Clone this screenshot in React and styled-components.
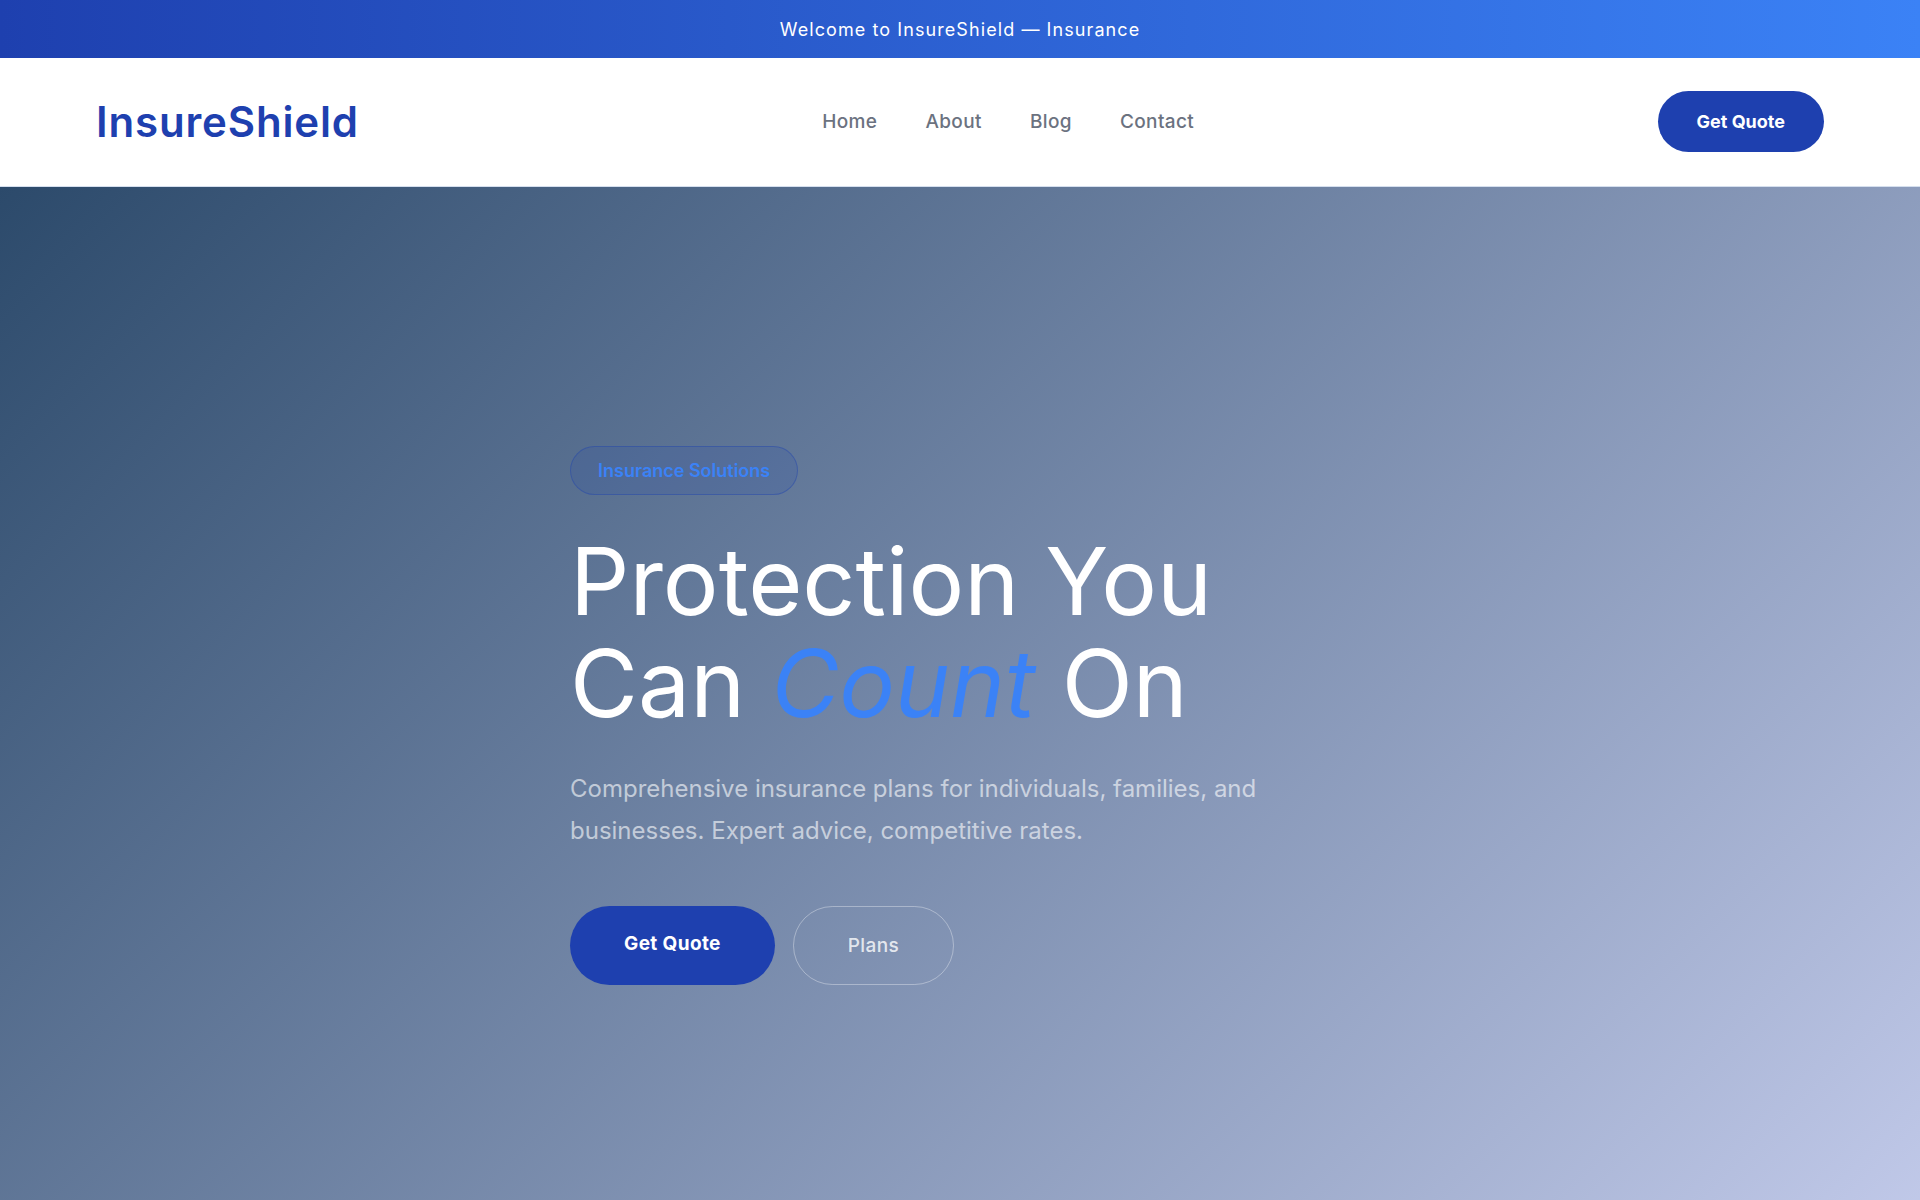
import React from 'react';
import styled, { createGlobalStyle } from 'styled-components';

const GlobalStyle = createGlobalStyle`
    :root {
        --primary: #1e40af;
        --accent: #3b82f6;
        --grey: #6b7280;
    }
    * {
        margin: 0;
        padding: 0;
        box-sizing: border-box;
    }
    body {
        font-family: 'Inter', sans-serif;
        background: #fff;
    }
    a {
        text-decoration: none;
    }
`;

const TopBar = styled.div`
    padding: 17px 5% 15px;
    background: linear-gradient(90deg, var(--primary), var(--accent));
    color: #fff;
    font-size: 18px;
    line-height: 26px;
    letter-spacing: 0.06em;
    text-align: center;
`;

const Nav = styled.nav`
    display: flex;
    justify-content: space-between;
    align-items: center;
    padding: 33px 5% 34px;
    background: #fff;
    border-bottom: 1px solid #d5dfee;
`;

const Logo = styled.a`
    color: var(--primary);
    font-size: 42px;
    font-weight: 600;
    letter-spacing: 0.02em;
    line-height: 50px;
`;

const Links = styled.ul`
    display: flex;
    gap: 48px;
    list-style: none;
    a {
        color: var(--grey);
        font-size: 19px;
        font-weight: 500;
        letter-spacing: 0.02em;
    }
`;

const Button = styled.button`
    padding: ${(props) => (props.$large ? '24px 54px 28px' : '18px 39px')};
    border: 0;
    border-radius: 50px;
    background: var(--primary);
    color: #fff;
    font-family: inherit;
    font-size: ${(props) => (props.$large ? '19px' : '18px')};
    font-weight: 700;
    letter-spacing: ${(props) => (props.$large ? '0.02em' : 'normal')};
    line-height: ${(props) => (props.$large ? '27px' : '25px')};
    cursor: pointer;
`;

const OutlineButton = styled(Button)`
    padding: 25px 54px;
    border: 1px solid rgba(255, 255, 255, 0.35);
    background: transparent;
    color: rgba(255, 255, 255, 0.8);
    font-weight: 500;
`;

const Hero = styled.section`
    min-height: 88vh;
    display: flex;
    align-items: center;
    justify-content: center;
    padding: 64px 5%;
    background: linear-gradient(135deg, #2c4a6b 0%, #c2caea 100%);
`;

const Content = styled.div`
    width: 100%;
    max-width: 780px;
`;

const Badge = styled.div`
    width: fit-content;
    margin-bottom: 35px;
    padding: 10px 27px;
    border: 1px solid rgba(30, 64, 175, 0.4);
    border-radius: 50px;
    background: rgba(30, 64, 175, 0.15);
    color: var(--accent);
    font-size: 18px;
    font-weight: 600;
    line-height: 27px;
`;

const Title = styled.h1`
    margin-bottom: 34px;
    color: #fff;
    font-size: 93px;
    font-weight: 400;
    line-height: 102px;
    em {
        color: var(--accent);
    }
`;

const Lead = styled.p`
    max-width: 720px;
    margin-bottom: 54px;
    color: rgba(255, 255, 255, 0.6);
    font-size: 24px;
    line-height: 42px;
`;

const Actions = styled.div`
    display: flex;
    gap: 18px;
`;

const links = ['Home', 'About', 'Blog', 'Contact'];

const App = () => {
    return (
        <>
            <GlobalStyle />
            <TopBar>Welcome to InsureShield — Insurance</TopBar>
            <Nav>
                <Logo href='#home'>InsureShield</Logo>
                <Links>
                    {links.map((link) => (
                        <li key={link}>
                            <a href={'#' + link.toLowerCase()}>{link}</a>
                        </li>
                    ))}
                </Links>
                <Button>Get Quote</Button>
            </Nav>
            <Hero>
                <Content>
                    <Badge>Insurance Solutions</Badge>
                    <Title>
                        Protection You
                        <br />
                        Can <em>Count</em> On
                    </Title>
                    <Lead>
                        Comprehensive insurance plans for individuals, families, and businesses. Expert advice,
                        competitive rates.
                    </Lead>
                    <Actions>
                        <Button $large>Get Quote</Button>
                        <OutlineButton $large>Plans</OutlineButton>
                    </Actions>
                </Content>
            </Hero>
        </>
    );
};

export default App;
